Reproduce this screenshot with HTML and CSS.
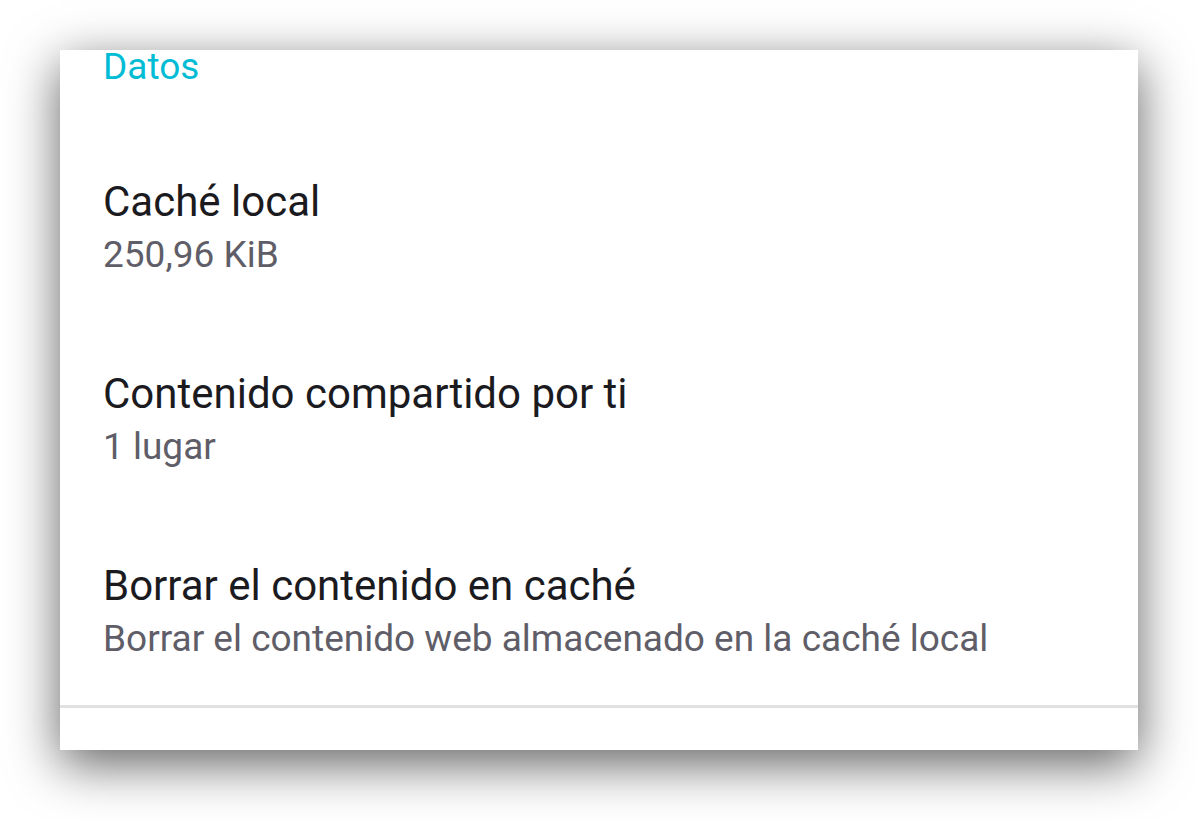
FILE: index.html
```html
<!DOCTYPE html>
<html lang="es">
<head>
<meta charset="utf-8">
<link rel="stylesheet" href="styles.css">
</head>
<body>
<div class="card">
  <div class="category">Datos</div>
  <div class="item">
    <div class="title">Caché local</div>
    <div class="summary">250,96 KiB</div>
  </div>
  <div class="item">
    <div class="title">Contenido compartido por ti</div>
    <div class="summary">1 lugar</div>
  </div>
  <div class="item last">
    <div class="title">Borrar el contenido en caché</div>
    <div class="summary">Borrar el contenido web almacenado en la caché local</div>
  </div>
  <div class="divider"></div>
</div>
</body>
</html>
```
FILE: styles.css
```css
html, body {
  margin: 0;
  padding: 0;
  background: #ffffff;
  width: 1198px;
  height: 820px;
  overflow: hidden;
}
body {
  font-family: Roboto, "Noto Sans", sans-serif;
}
.card {
  margin: 50px 0 0 60px;
  width: 1078px;
  height: 700px;
  background: #ffffff;
  box-shadow: 0 14px 48px rgba(0, 0, 0, 0.62);
  display: flex;
  flex-direction: column;
}
.category {
  padding-left: 43px;
  font-size: 37px;
  line-height: 44px;
  height: 44px;
  margin-top: -5px;
  margin-bottom: 43px;
  color: #00bcd4;
}
.item {
  padding: 43px 43px;
}
.item.last {
  padding-bottom: 40px;
}
.title {
  font-size: 42px;
  line-height: 54px;
  color: #1b1b1f;
}
.summary {
  font-size: 37px;
  line-height: 52px;
  color: #5f5e68;
}
.divider {
  height: 3px;
  flex: none;
  background: #e1e1e1;
}
```
